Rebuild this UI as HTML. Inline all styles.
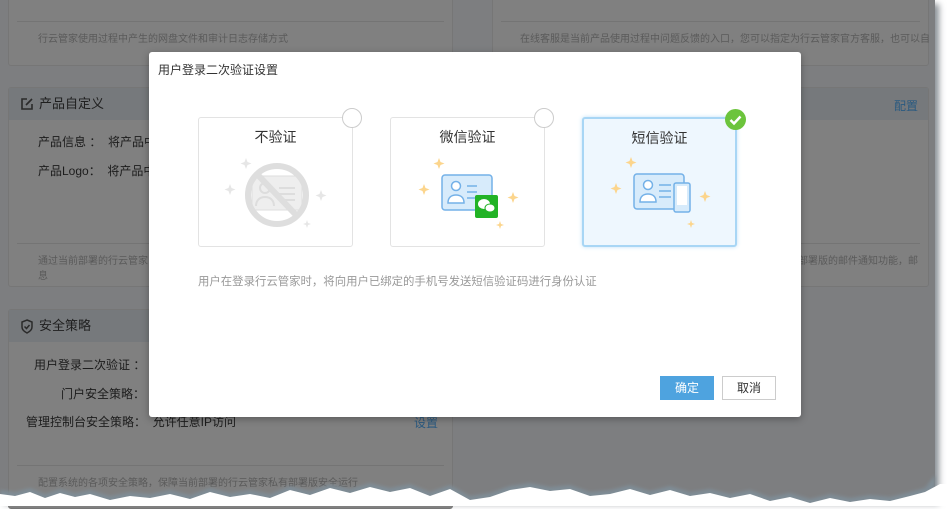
<!DOCTYPE html>
<html><head><meta charset="utf-8"><style>
*{margin:0;padding:0;box-sizing:border-box}
body{width:947px;height:506px;background:#fff;position:relative;overflow:hidden;font-family:"Liberation Sans","Noto Sans CJK SC",sans-serif}
.page{position:absolute;left:0;top:0;width:935px;height:500px;background:#7d7e80;box-shadow:4px 4px 6px rgba(60,70,80,.6)}
.panel{position:absolute;background:#808080;border:1px solid #767676;border-radius:3px}
.hd{position:absolute;left:0;right:0;height:32px;background:#76797c;color:#1f1f1f;font-size:13px;line-height:32px;padding-left:30px}
.t{position:absolute;font-size:12px;color:#1c1c1c;white-space:nowrap}
.g{position:absolute;font-size:10px;color:#5a5a5a;white-space:nowrap}
.ln{position:absolute;height:1px;background:#747474}
.modal{position:absolute;left:149px;top:52px;width:652px;height:365px;background:#fff;border-radius:3px;box-shadow:0 2px 8px rgba(0,0,0,.3)}
.card{position:absolute;top:65px;width:155px;height:130px;border:1px solid #e3e3e3;border-radius:3px;background:#fff}
.card .n{position:absolute;top:9px;width:100%;text-align:center;font-size:14px;color:#333}
.card svg{position:absolute;left:0;top:0}
.rad{position:absolute;top:-10px;right:-10px;width:20px;height:20px;border-radius:50%;border:1px solid #ccc;background:#fff}
.sel{background:#eef7fe;border:2px solid #a8d6f5;box-shadow:0 0 4px #bfe0f7}
.btn{position:absolute;top:324px;height:24px;width:54px;font-size:12px;text-align:center;line-height:22px}
</style></head><body>
<div class="page">
 <div class="panel" style="left:8px;top:-4px;width:445px;height:70px">
  <div class="ln" style="left:8px;right:8px;top:24px"></div>
  <div class="g" style="left:29px;top:33px">行云管家使用过程中产生的网盘文件和审计日志存储方式</div>
 </div>
 <div class="panel" style="left:492px;top:-4px;width:437px;height:70px">
  <div class="ln" style="left:8px;right:8px;top:24px"></div>
  <div class="g" style="left:27px;top:33px">在线客服是当前产品使用过程中问题反馈的入口，您可以指定为行云管家官方客服，也可以自</div>
 </div>
 <div class="panel" style="left:8px;top:87px;width:445px;height:200px">
  <div class="hd" style="top:0">产品自定义</div>
  <svg style="position:absolute;left:11px;top:9px" width="14" height="14" viewBox="0 0 14 14"><path d="M7 2H2v10h10V7M6 8l6-6" stroke="#2a2a2a" stroke-width="1.6" fill="none"/></svg>
  <div class="t" style="left:29px;top:45px">产品信息 ：&nbsp;&nbsp;将产品中</div>
  <div class="t" style="left:29px;top:74px">产品Logo：&nbsp;&nbsp;将产品中</div>
  <div class="ln" style="left:8px;right:8px;top:155px"></div>
  <div class="g" style="left:29px;top:164px">通过当前部署的行云管家<br>息</div>
 </div>
 <div class="panel" style="left:492px;top:87px;width:437px;height:200px">
  <div class="hd" style="top:0"></div>
  <div class="t" style="right:10px;top:9px;color:#2a5a80">配置</div>
  <div class="ln" style="left:8px;right:8px;top:155px"></div>
  <div class="g" style="right:10px;top:164px">部署版的邮件通知功能，邮</div>
 </div>
 <div class="panel" style="left:8px;top:309px;width:445px;height:200px">
  <div class="hd" style="top:0">安全策略</div>
  <svg style="position:absolute;left:11px;top:9px" width="14" height="15" viewBox="0 0 14 15"><path d="M7 1l5 2v5c0 3-3 5-5 6-2-1-5-3-5-6V3z M4.5 7.5l2 2 3-3.5" stroke="#2a2a2a" stroke-width="1.5" fill="none"/></svg>
  <div class="t" style="left:25px;top:46px">用户登录二次验证 ：</div>
  <div class="t" style="left:52px;top:75px">门户安全策略：</div>
  <div class="t" style="left:17px;top:103px">管理控制台安全策略：&nbsp;&nbsp;允许任意IP访问</div>
  <div class="t" style="left:405px;top:104px;color:#2a5a80">设置</div>
  <div class="ln" style="left:8px;right:8px;top:155px"></div>
  <div class="g" style="left:29px;top:164px">配置系统的各项安全策略，保障当前部署的行云管家私有部署版安全运行</div>
 </div>
</div>
<svg style="position:absolute;left:0;top:470px" width="947" height="36" viewBox="0 0 947 36"><defs><filter id="b"><feGaussianBlur stdDeviation="1.5"/></filter></defs>
<path filter="url(#b)" fill="#7f8c95" d="M0 20 L15 22 30 18 45 24 60 19 75 23 90 20 110 26 130 22 150 24 170 20 190 25 210 18 230 23 250 20 270 24 290 16 310 21 330 14 350 19 370 13 390 18 410 14 430 22 450 15 470 26 490 23 510 16 530 13 550 17 570 15 590 22 610 20 630 15 650 21 670 16 690 22 710 19 730 24 750 20 770 27 790 23 810 29 830 24 850 28 870 25 890 27 910 22 925 18 935 5 L935 36 0 36Z"/>
<path fill="#fff" d="M0 24 L15 26 30 22 45 28 60 23 75 27 90 24 110 30 130 26 150 28 170 24 190 29 210 22 230 27 250 24 270 28 290 20 310 25 330 18 350 23 370 17 390 22 410 18 430 26 450 19 470 30 490 27 510 20 530 17 550 21 570 19 590 26 610 24 630 19 650 25 670 20 690 26 710 23 730 28 750 24 770 31 790 27 810 33 830 28 850 32 870 29 890 31 910 26 925 22 940 14 947 14 947 36 0 36Z"/>
</svg>
<div class="modal">
 <div style="position:absolute;left:9px;top:9px;font-size:12px;color:#333">用户登录二次验证设置</div>
 <div class="card" style="left:49px">
  <div class="n">不验证</div><div class="rad"></div>
  <svg width="155" height="130" viewBox="0 0 155 130">
   <g fill="#e6e6e6"><path d="M47 40l1.5 4 4 1.5-4 1.5-1.5 4-1.5-4-4-1.5 4-1.5z"/><path d="M31 66l1.5 4 4 1.5-4 1.5-1.5 4-1.5-4-4-1.5 4-1.5z"/><path d="M122 72l1.5 4 4 1.5-4 1.5-1.5 4-1.5-4-4-1.5 4-1.5z"/><path d="M108 102l1 3 3 1-3 1-1 3-1-3-3-1 3-1z"/></g>
   <rect x="53" y="58" width="50" height="34" fill="#eee" stroke="#ddd"/>
   <circle cx="66" cy="70" r="5" fill="none" stroke="#ddd" stroke-width="2"/><path d="M57 88c0-6 4-9 9-9s9 3 9 9" fill="none" stroke="#ddd" stroke-width="2"/>
   <path d="M80 70h16M80 76h16M80 82h16" stroke="#ddd" stroke-width="2"/>
   <circle cx="78" cy="77" r="29" fill="none" stroke="#dedede" stroke-width="6"/><path d="M58 56l40 42" stroke="#dedede" stroke-width="6"/>
  </svg>
 </div>
 <div class="card" style="left:241px">
  <div class="n">微信验证</div><div class="rad"></div>
  <svg width="155" height="130" viewBox="0 0 155 130">
   <g fill="#fcd58c"><path d="M48 40l1.5 4 4 1.5-4 1.5-1.5 4-1.5-4-4-1.5 4-1.5z"/><path d="M33 66l1.5 4 4 1.5-4 1.5-1.5 4-1.5-4-4-1.5 4-1.5z"/><path d="M122 74l1.5 4 4 1.5-4 1.5-1.5 4-1.5-4-4-1.5 4-1.5z"/><path d="M109 103l1 3 3 1-3 1-1 3-1-3-3-1 3-1z"/></g>
   <rect x="51" y="57" width="50" height="35" rx="3" fill="#d7ebfb" stroke="#74b1e8" stroke-width="1.5"/>
   <circle cx="65" cy="68" r="4.5" fill="#fff" stroke="#74b1e8" stroke-width="1.5"/><path d="M57 85c0-6 4-8 8-8s8 2 8 8z" fill="#fff" stroke="#74b1e8" stroke-width="1.5"/>
   <path d="M76 68h10M76 74h10M76 80h10" stroke="#74b1e8" stroke-width="1.5"/>
   <rect x="84" y="77" width="23" height="23" rx="2" fill="#22b326"/>
   <ellipse cx="93" cy="86" rx="6" ry="5" fill="#fff"/><ellipse cx="99" cy="90" rx="5" ry="4" fill="#fff" stroke="#22b326"/>
  </svg>
 </div>
 <div class="card sel" style="left:433px">
  <div class="n">短信验证</div>
  <div style="position:absolute;top:-10px;right:-11px;width:21px;height:21px;border-radius:50%;background:#6cc43c"><svg width="21" height="21"><path d="M5.5 11l3.5 3.5 6.5-7" stroke="#fff" stroke-width="2.5" fill="none"/></svg></div>
  <svg width="155" height="130" viewBox="0 0 155 130">
   <g fill="#fcd58c"><path d="M47 38l1.5 4 4 1.5-4 1.5-1.5 4-1.5-4-4-1.5 4-1.5z"/><path d="M32 64l1.5 4 4 1.5-4 1.5-1.5 4-1.5-4-4-1.5 4-1.5z"/><path d="M121 72l1.5 4 4 1.5-4 1.5-1.5 4-1.5-4-4-1.5 4-1.5z"/><path d="M107 101l1 3 3 1-3 1-1 3-1-3-3-1 3-1z"/></g>
   <rect x="50" y="55" width="50" height="35" rx="3" fill="#d7ebfb" stroke="#74b1e8" stroke-width="1.5"/>
   <circle cx="64" cy="66" r="4.5" fill="#fff" stroke="#74b1e8" stroke-width="1.5"/><path d="M56 83c0-6 4-8 8-8s8 2 8 8z" fill="#fff" stroke="#74b1e8" stroke-width="1.5"/>
   <path d="M75 66h12M75 72h12M75 78h12" stroke="#74b1e8" stroke-width="1.5"/>
   <rect x="90" y="64" width="16" height="29" rx="2" fill="#d7ebfb" stroke="#74b1e8" stroke-width="1.5"/>
   <rect x="93" y="67" width="10" height="19" fill="#fff"/>
  </svg>
 </div>
 <div style="position:absolute;left:49px;top:221px;font-size:11.4px;color:#999">用户在登录行云管家时，将向用户已绑定的手机号发送短信验证码进行身份认证</div>
 <div class="btn" style="left:511px;background:#4ea3df;color:#fff;border:1px solid #4ea3df">确定</div>
 <div class="btn" style="left:573px;background:#fff;color:#333;border:1px solid #ccc">取消</div>
</div>
</body></html>
